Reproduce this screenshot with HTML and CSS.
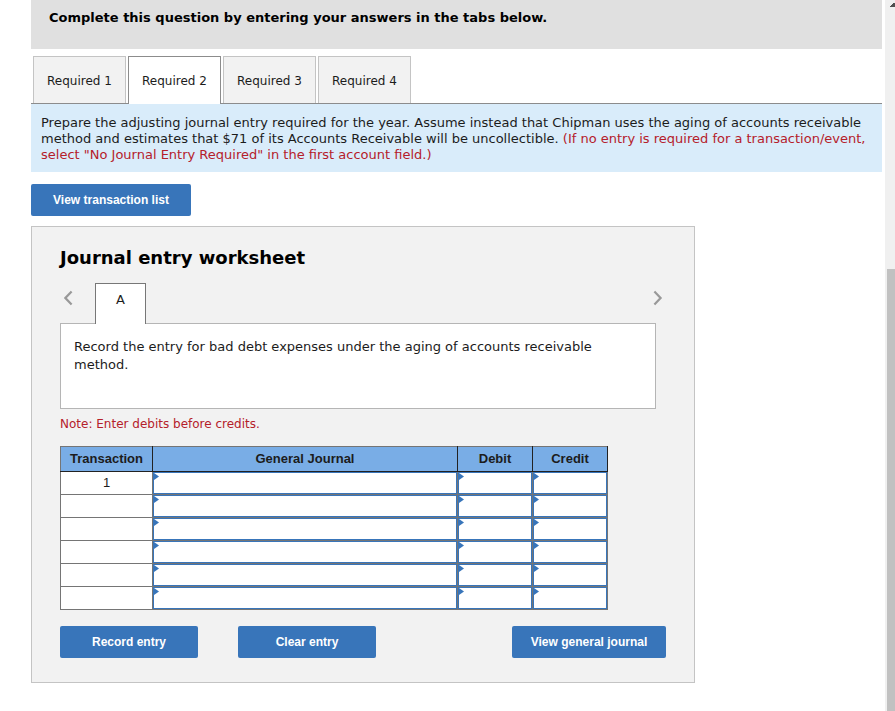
FILE: index.html
```html
<!DOCTYPE html>
<html lang="en">
<head>
<meta charset="utf-8">
<title>Journal entry worksheet</title>
<link rel="stylesheet" href="styles.css">
</head>
<body>
<main class="page">
  <header class="banner">Complete this question by entering your answers in the tabs below.</header>
  <nav class="tabs">
    <button class="tab" type="button">Required 1</button>
    <button class="tab tab-active" type="button">Required 2</button>
    <button class="tab" type="button">Required 3</button>
    <button class="tab" type="button">Required 4</button>
  </nav>
  <p class="instructions">Prepare the adjusting journal entry required for the year. Assume instead that Chipman uses the aging of accounts receivable method and estimates that $71 of its Accounts Receivable will be uncollectible. <span class="hint">(If no entry is required for a transaction/event, select "No Journal Entry Required" in the first account field.)</span></p>
  <button class="btn btn-list" type="button">View transaction list</button>
  <section class="worksheet">
    <h1 class="title">Journal entry worksheet</h1>
    <div class="entries">
      <button class="arrow" type="button" aria-label="Previous entry"><svg width="10" height="16" viewBox="0 0 10 16"><path d="M7.6 1.5L1.4 8L7.6 14.5" /></svg></button>
      <button class="entry-tab" type="button">A</button>
      <button class="arrow arrow-next" type="button" aria-label="Next entry"><svg width="10" height="16" viewBox="0 0 10 16"><path d="M1.4 1.5L7.6 8L1.4 14.5" /></svg></button>
    </div>
    <p class="description">Record the entry for bad debt expenses under the aging of accounts receivable method.</p>
    <p class="note">Note: Enter debits before credits.</p>
    <table class="journal">
      <colgroup><col class="col-transaction"><col><col class="col-amount"><col class="col-amount"></colgroup>
      <thead><tr><th>Transaction</th><th>General Journal</th><th>Debit</th><th>Credit</th></tr></thead>
      <tbody>
        <tr><td>1</td><td class="field"><input type="text" aria-label="Account 1"></td><td class="field"><input type="text" aria-label="Debit 1"></td><td class="field"><input type="text" aria-label="Credit 1"></td></tr>
        <tr><td></td><td class="field"><input type="text" aria-label="Account 2"></td><td class="field"><input type="text" aria-label="Debit 2"></td><td class="field"><input type="text" aria-label="Credit 2"></td></tr>
        <tr><td></td><td class="field"><input type="text" aria-label="Account 3"></td><td class="field"><input type="text" aria-label="Debit 3"></td><td class="field"><input type="text" aria-label="Credit 3"></td></tr>
        <tr><td></td><td class="field"><input type="text" aria-label="Account 4"></td><td class="field"><input type="text" aria-label="Debit 4"></td><td class="field"><input type="text" aria-label="Credit 4"></td></tr>
        <tr><td></td><td class="field"><input type="text" aria-label="Account 5"></td><td class="field"><input type="text" aria-label="Debit 5"></td><td class="field"><input type="text" aria-label="Credit 5"></td></tr>
        <tr><td></td><td class="field"><input type="text" aria-label="Account 6"></td><td class="field"><input type="text" aria-label="Debit 6"></td><td class="field"><input type="text" aria-label="Credit 6"></td></tr>
      </tbody>
    </table>
    <div class="actions">
      <button class="btn btn-entry" type="button">Record entry</button>
      <button class="btn btn-entry" type="button">Clear entry</button>
      <button class="btn btn-journal" type="button">View general journal</button>
    </div>
  </section>
</main>
<div class="scrollbar" aria-hidden="true">
  <svg class="scroll-up" width="5" height="4" viewBox="0 0 5 4"><path d="M0 4V3H1V2H2V1H3V0H5V4Z" /></svg>
  <div class="scroll-thumb"></div>
</div>
</body>
</html>
```
FILE: styles.css
```css
* {
  box-sizing: border-box;
}

body {
  display: flex;
  min-height: 100vh;
  margin: 0;
  background: #fff;
  color: #1c1c1c;
  font: 13px/16px Verdana, "DejaVu Sans", sans-serif;
}

button {
  font: inherit;
  color: inherit;
}

.page {
  flex: 1;
  min-width: 0;
  padding: 0 3px 28px 31px;
}

.banner {
  padding: 10px 18px 23px;
  background: #e0e0e0;
  color: #000;
  font-weight: bold;
}

.tabs {
  display: flex;
  gap: 2px;
  margin-top: 7px;
  padding-left: 2px;
  border-bottom: 1px solid #8c8c8c;
}

.tab {
  width: 93px;
  height: 47px;
  padding: 2px 0 0;
  border: 1px solid #c4c4c4;
  border-bottom: 0;
  background: #f2f2f2;
  font-size: 12px;
}

.tab-active {
  height: 48px;
  margin-bottom: -1px;
  padding-top: 1px;
  border-color: #8c8c8c;
  background: #fff;
}

.instructions {
  margin: 0;
  padding: 11px 10px 9px;
  background: #d9ecfa;
}

.hint,
.note {
  color: #b5202a;
}

.btn {
  height: 32px;
  padding: 0;
  border: 0;
  border-radius: 2px;
  background: #3875ba;
  color: #fff;
  font: bold 12px/16px Arial, "Liberation Sans", sans-serif;
}

.btn-list {
  display: block;
  width: 160px;
  margin: 12px 0 10px;
}

.worksheet {
  max-width: 664px;
  padding: 20px 28px 24px;
  border: 1px solid #c4c4c4;
  background: #f2f2f2;
}

.title {
  margin: 0 0 14px;
  color: #000;
  font-size: 18px;
  line-height: 22px;
}

.entries {
  display: flex;
  align-items: flex-start;
}

.arrow {
  width: 17px;
  height: 30px;
  padding: 0;
  border: 0;
  background: none;
}

.arrow svg {
  display: block;
  margin: auto;
  fill: none;
  stroke: #999;
  stroke-width: 2.2;
}

.arrow-next {
  margin-left: auto;
}

.entry-tab {
  position: relative;
  width: 51px;
  height: 41px;
  margin: 0 0 -1px 18px;
  padding: 0 0 8px;
  border: 1px solid #777;
  border-bottom: 0;
  background: #fff;
}

.description {
  min-height: 86px;
  margin: 0 10px 7px 0;
  padding: 14px 13px;
  border: 1px solid #b5b5b5;
  background: #fff;
  line-height: 18px;
}

.note {
  margin: 0 0 14px;
  font-size: 12px;
}

.journal {
  width: calc(100% - 58px);
  border-collapse: collapse;
  table-layout: fixed;
  background: #fff;
  font: 13px/16px Arial, "Liberation Sans", sans-serif;
  text-align: center;
}

.col-transaction {
  width: 92px;
}

.col-amount {
  width: 75px;
}

.journal th {
  height: 25px;
  padding: 0;
  border: 1px solid #222;
  border-top-color: #757575;
  background: #79ade6;
}

.journal th:first-child {
  border-left-color: #757575;
}

.journal td {
  height: 23px;
  padding: 0;
  border: 1px solid #757575;
}

.field {
  position: relative;
}

.field::before {
  content: "";
  position: absolute;
  top: 1px;
  left: 1px;
  width: 5px;
  height: 7px;
  background: #3875ba;
  clip-path: polygon(0 0, 100% 50%, 0 100%);
}

.field input {
  display: block;
  width: 100%;
  height: 22px;
  padding: 0 6px;
  border: 1px solid #3875ba;
  background: #fff;
  font: inherit;
}

.actions {
  display: flex;
  gap: 40px;
  margin-top: 16px;
}

.btn-entry {
  width: 138px;
}

.btn-journal {
  width: 154px;
  margin-left: auto;
}

.scrollbar {
  display: flex;
  flex-direction: column;
  width: 10px;
  padding: 3px 0 0 2px;
  background: #f0f0f0;
}

.scroll-up {
  margin-left: 3px;
  fill: #505050;
}

.scroll-thumb {
  flex: 1;
  margin-top: 262px;
  background: #c1c1c1;
}
```
